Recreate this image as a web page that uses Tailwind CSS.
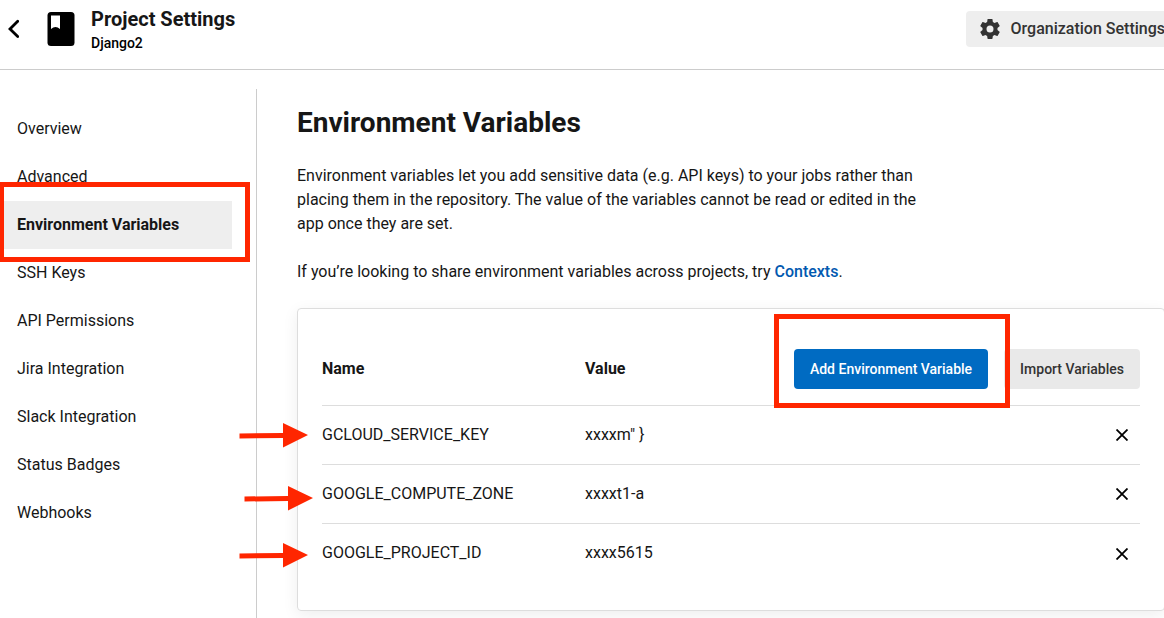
<!DOCTYPE html>
<html lang="en">
<head>
<meta charset="utf-8">
<meta name="viewport" content="width=device-width, initial-scale=1">
<title>Project Settings</title>
<script src="https://cdn.jsdelivr.net/npm/@tailwindcss/browser@4"></script>
</head>
<body class="flex min-h-screen flex-col overflow-x-hidden bg-white font-[Roboto,sans-serif] text-base text-[#161616]">
<header class="flex h-[70px] items-start justify-between border-b border-[#ccc]">
  <div class="flex items-start">
    <button type="button" aria-label="Back" class="mt-[19px] ml-[7px] h-5 w-3">
      <svg viewBox="0 0 12 20" class="h-5 w-3" fill="none" stroke="#000" stroke-width="2.8" stroke-linecap="round"><path d="M10.700 2.300 3 10l7.700 7.500"/></svg>
    </button>
    <svg viewBox="0 0 28 34" class="mt-3 ml-7 h-[34px] w-7" aria-hidden="true"><rect x="0.500" y="0" width="27" height="34" rx="3.500" fill="#000"/><path d="M4 3.500h9V17q-4.500-4-9 0z" fill="#fff"/></svg>
    <div class="ml-4 pt-[7px]">
      <h1 class="text-xl leading-6 font-bold">Project Settings</h1>
      <p class="mt-1 text-sm leading-4 font-medium text-black">Django2</p>
    </div>
  </div>
  <button type="button" class="mt-[11px] -mr-4 flex h-9 items-center gap-[9px] rounded bg-[#eee] pr-[15px] pl-3 font-medium whitespace-nowrap text-[#333]">
    <svg viewBox="0 0 24 24" class="size-6" fill="#333" aria-hidden="true"><path d="M19.430 12.980c.04-.32.070-.64.070-.98s-.03-.66-.07-.98l2.110-1.650c.19-.15.240-.42.120-.64l-2-3.460c-.12-.22-.39-.3-.61-.22l-2.490 1c-.52-.4-1.080-.73-1.690-.98l-.38-2.650C14.460 2.180 14.250 2 14 2h-4c-.25 0-.46.180-.49.420l-.38 2.650c-.61.250-1.170.590-1.690.980l-2.490-1c-.23-.09-.49 0-.61.220l-2 3.460c-.13.220-.07.490.120.640l2.110 1.650c-.04.320-.07.650-.07.980s.03.660.070.980l-2.110 1.650c-.19.150-.24.420-.12.640l2 3.460c.120.220.390.300.610.220l2.490-1c.520.400 1.080.730 1.690.980l.38 2.650c.03.240.240.420.490.420h4c.250 0 .460-.18.490-.42l.38-2.650c.61-.25 1.170-.59 1.690-.98l2.490 1c.230.090.490 0 .61-.22l2-3.460c.12-.22.070-.49-.12-.64zM12 15.500a3.500 3.500 0 1 1 0-7 3.500 3.500 0 0 1 0 7z"/></svg>
    Organization Settings
  </button>
</header>

<div class="flex flex-1 pt-[19px]">
  <nav aria-label="Project settings" class="w-[257px] shrink-0 border-r border-[#ccc] pt-4 pr-6">
    <ul>
      <li><a href="#" class="block py-3 pl-[17px]">Overview</a></li>
      <li><a href="#" class="block py-3 pl-[17px]">Advanced</a></li>
      <li class="relative">
        <a href="#" aria-current="page" class="block bg-[#eee] py-3 pl-[17px] font-bold">Environment Variables</a>
        <span class="pointer-events-none absolute -top-[19px] -right-[18px] -bottom-[13px] -left-px z-10 border-5 border-[#ff2600]"></span>
      </li>
      <li><a href="#" class="block py-3 pl-[17px]">SSH Keys</a></li>
      <li><a href="#" class="block py-3 pl-[17px]">API Permissions</a></li>
      <li><a href="#" class="block py-3 pl-[17px]">Jira Integration</a></li>
      <li><a href="#" class="block py-3 pl-[17px]">Slack Integration</a></li>
      <li><a href="#" class="block py-3 pl-[17px]">Status Badges</a></li>
      <li><a href="#" class="block py-3 pl-[17px]">Webhooks</a></li>
    </ul>
  </nav>

  <main class="min-w-0 flex-1 pt-4 pl-10">
    <h2 class="text-[28px] leading-9 font-bold">Environment Variables</h2>
    <p class="mt-[23px] max-w-[640px]">Environment variables let you add sensitive data (e.g. API keys) to your jobs rather than placing them in the repository. The value of the variables cannot be read or edited in the app once they are set.</p>
    <p class="mt-6">If you’re looking to share environment variables across projects, try <a href="#" class="font-medium text-[#0259b0]">Contexts</a>.</p>

    <section class="mt-6 -mr-px rounded border border-[#ddd] px-6 pt-6 pb-7 shadow-[0_4px_16px_rgba(0,0,0,0.07)]">
      <table class="w-full table-fixed border-collapse text-left">
        <colgroup><col class="w-[263px]"><col><col class="w-[346px]"></colgroup>
        <thead>
          <tr class="h-[72px] border-b border-[#ddd]">
            <th scope="col" class="font-bold">Name</th>
            <th scope="col" class="font-bold">Value</th>
            <th scope="col">
              <div class="flex justify-end gap-4 text-sm">
                <span class="relative z-10">
                  <button type="button" class="h-10 rounded bg-[#006bc2] px-4 font-medium whitespace-nowrap text-white">Add Environment Variable</button>
                  <span class="pointer-events-none absolute -top-[35px] -right-[22px] -bottom-[19px] -left-5 border-5 border-[#ff2600]"></span>
                </span>
                <button type="button" class="h-10 rounded bg-[#e9e9e9] px-4 font-medium whitespace-nowrap text-[#333]">Import Variables</button>
              </div>
            </th>
          </tr>
        </thead>
        <tbody>
          <tr class="h-[59px] border-b border-[#ddd]">
            <td><div class="relative">GCLOUD_SERVICE_KEY
              <svg viewBox="0 0 70 26" class="absolute -top-px -left-[83px] h-[26px] w-[70px]" fill="#ff2600" aria-hidden="true"><path d="M.5 11.500 44 11V1l25 12-25 12.500V16L.5 16.500z"/></svg></div></td>
            <td>xxxxm" }</td>
            <td class="pr-3 text-right"><button type="button" aria-label="Delete GCLOUD_SERVICE_KEY" class="align-middle"><svg viewBox="0 0 12 12" class="size-3" fill="none" stroke="#000" stroke-width="1.8"><path d="m.5.5 11 11m0-11-11 11"/></svg></button></td>
          </tr>
          <tr class="h-[59px] border-b border-[#ddd]">
            <td><div class="relative">GOOGLE_COMPUTE_ZONE
              <svg viewBox="0 0 70 26" class="absolute top-[3px] -left-[78px] h-[26px] w-[70px]" fill="#ff2600" aria-hidden="true"><path d="M.5 11.500 44 11V1l25 12-25 12.500V16L.5 16.500z"/></svg></div></td>
            <td>xxxxt1-a</td>
            <td class="pr-3 text-right"><button type="button" aria-label="Delete GOOGLE_COMPUTE_ZONE" class="align-middle"><svg viewBox="0 0 12 12" class="size-3" fill="none" stroke="#000" stroke-width="1.8"><path d="m.5.5 11 11m0-11-11 11"/></svg></button></td>
          </tr>
          <tr class="h-[59px]">
            <td><div class="relative">GOOGLE_PROJECT_ID
              <svg viewBox="0 0 70 26" class="absolute top-px -left-[83px] h-[26px] w-[70px]" fill="#ff2600" aria-hidden="true"><path d="M.5 11.500 44 11V1l25 12-25 12.500V16L.5 16.500z"/></svg></div></td>
            <td>xxxx5615</td>
            <td class="pr-3 text-right"><button type="button" aria-label="Delete GOOGLE_PROJECT_ID" class="align-middle"><svg viewBox="0 0 12 12" class="size-3" fill="none" stroke="#000" stroke-width="1.8"><path d="m.5.5 11 11m0-11-11 11"/></svg></button></td>
          </tr>
        </tbody>
      </table>
    </section>
  </main>
</div>
</body>
</html>
